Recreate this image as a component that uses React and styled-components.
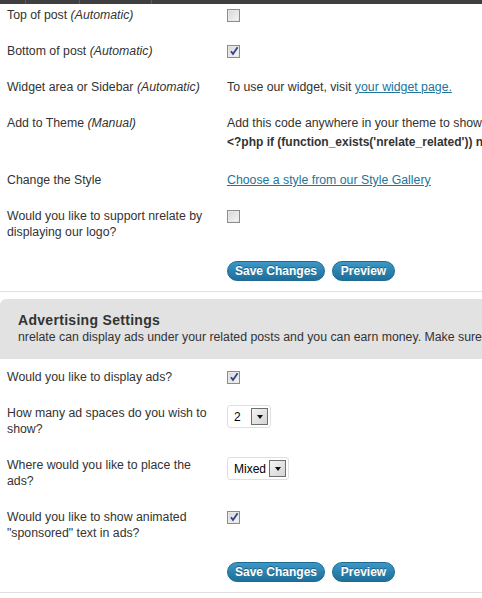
import React from 'react';
import styled, { createGlobalStyle } from 'styled-components';

const GlobalStyle = createGlobalStyle`
  html, body {
    margin: 0;
    padding: 0;
    background: #fff;
    overflow: hidden;
  }
  body {
    font-family: "Liberation Sans", Arial, sans-serif;
    font-size: 12.3px;
    color: #333;
  }
`;

const Page = styled.div`
  width: 482px;
  overflow: hidden;
`;

const TopBar = styled.div`
  display: flex;
  height: 4px;
  background: #3f3f3f;
`;

const BarCell = styled.div`
  width: ${p => p.w}px;
  border-right: 1px solid #5c5c5c;
`;

const Row = styled.div`
  display: flex;
  align-items: flex-start;
  padding: ${p => (p.first ? '3px' : '10px')} 0 10px 7px;
  line-height: 16px;
`;

const Label = styled.div`
  width: 200px;
  flex-shrink: 0;
  margin-right: 20px;
`;

const Value = styled.div`
  white-space: nowrap;
`;

const Code = styled.div`
  font-size: 12px;
  font-weight: bold;
  line-height: 20px;
  margin-top: 1px;
`;

const Link = styled.a`
  color: #21759b;
  text-decoration: underline;
  cursor: pointer;
`;

const Box = styled.span`
  position: relative;
  display: block;
  width: 11px;
  height: 11px;
  margin-top: 2px;
  border: 1px solid #8c8c8c;
  background: linear-gradient(135deg, #d6d6d6 0%, #f6f6f6 100%);
  box-shadow: inset 0 0 0 1px #e8e8e8;
  svg {
    position: absolute;
    left: 1px;
    top: 0px;
  }
`;

const Checkbox = ({ checked }) => (
  <Box>
    {checked && (
      <svg width="10" height="10" viewBox="0 0 10 10">
        <path d="M2 5.2 L4 8 L8.6 1.2" fill="none" stroke="#31448a" strokeWidth="1.8" />
      </svg>
    )}
  </Box>
);

const Buttons = styled.div`
  display: flex;
  gap: 7px;
  padding: ${p => p.pt}px 0 10px 227px;
`;

const Button = styled.button`
  height: 20px;
  padding: 0;
  white-space: nowrap;
  border: 1px solid #1e6a92;
  border-radius: 11px;
  background: linear-gradient(to bottom, #3d98c7 0%, #2a82b0 50%, #1f6f99 100%);
  color: #fff;
  font-family: "Liberation Sans", Arial, sans-serif;
  font-size: 12px;
  font-weight: bold;
  line-height: 18px;
  text-shadow: 0 -1px 0 rgba(0, 0, 0, 0.35);
  width: ${p => p.w}px;
`;

const Divider = styled.div`
  height: 1px;
  background: #dfdfdf;
`;

const SectionHead = styled.div`
  margin-top: 7px;
  background: #e2e2e2;
  border-top-left-radius: 6px;
  padding: 13px 0 14px 18px;
  white-space: nowrap;
`;

const Title = styled.h3`
  margin: 0;
  font-size: 14px;
  font-weight: bold;
  line-height: 17px;
  color: #333;
  letter-spacing: 0.3px;
`;

const Desc = styled.div`
  font-size: 12.3px;
  line-height: 15px;
  margin-top: 1px;
`;

const Select = styled.div`
  display: flex;
  align-items: center;
  justify-content: space-between;
  box-sizing: border-box;
  width: ${p => p.w}px;
  height: 23px;
  padding: 0 2px 0 6px;
  border: 1px solid #dfdfdf;
  border-radius: 3px;
  background: #fff;
  font-size: 12px;
  color: #000;
`;

const Arrow = styled.span`
  display: flex;
  align-items: center;
  justify-content: center;
  box-sizing: border-box;
  width: 17px;
  height: 17px;
  border: 1px solid #6f6f6f;
  background: linear-gradient(135deg, #f4f4f4 0%, #d4d4d4 100%);
  &::after {
    content: '';
    border-left: 3.5px solid transparent;
    border-right: 3.5px solid transparent;
    border-top: 4px solid #111;
    margin-top: 1px;
  }
`;

const DropDown = ({ value, w }) => (
  <Select w={w}>
    <span>{value}</span>
    <Arrow />
  </Select>
);

export default function App() {
  return (
    <Page>
      <GlobalStyle />
      <TopBar>
        <BarCell w={25} />
        <BarCell w={53} />
        <BarCell w={71} />
      </TopBar>

      <Row first>
        <Label>Top of post <i>(Automatic)</i></Label>
        <Checkbox />
      </Row>
      <Row>
        <Label>Bottom of post <i>(Automatic)</i></Label>
        <Checkbox checked />
      </Row>
      <Row>
        <Label>Widget area or Sidebar <i>(Automatic)</i></Label>
        <Value>To use our widget, visit <Link>your widget page.</Link></Value>
      </Row>
      <Row>
        <Label>Add to Theme <i>(Manual)</i></Label>
        <Value>
          Add this code anywhere in your theme to show related posts:
          <Code>&lt;?php if (function_exists('nrelate_related')) nrelate_related(); ?&gt;</Code>
        </Value>
      </Row>
      <Row>
        <Label>Change the Style</Label>
        <Value><Link>Choose a style from our Style Gallery</Link></Value>
      </Row>
      <Row>
        <Label>Would you like to support nrelate by displaying our logo?</Label>
        <Checkbox />
      </Row>
      <Buttons pt={11}>
        <Button w={98}>Save Changes</Button>
        <Button w={63}>Preview</Button>
      </Buttons>
      <Divider />

      <SectionHead>
        <Title>Advertising Settings</Title>
        <Desc>nrelate can display ads under your related posts and you can earn money. Make sure you read our terms.</Desc>
      </SectionHead>

      <Row>
        <Label>Would you like to display ads?</Label>
        <Checkbox checked />
      </Row>
      <Row>
        <Label>How many ad spaces do you wish to show?</Label>
        <DropDown value="2" w={44} />
      </Row>
      <Row>
        <Label>Where would you like to place the ads?</Label>
        <DropDown value="Mixed" w={62} />
      </Row>
      <Row>
        <Label>Would you like to show animated "sponsored" text in ads?</Label>
        <Checkbox checked />
      </Row>
      <Buttons pt={11}>
        <Button w={98}>Save Changes</Button>
        <Button w={63}>Preview</Button>
      </Buttons>
      <Divider />
    </Page>
  );
}
